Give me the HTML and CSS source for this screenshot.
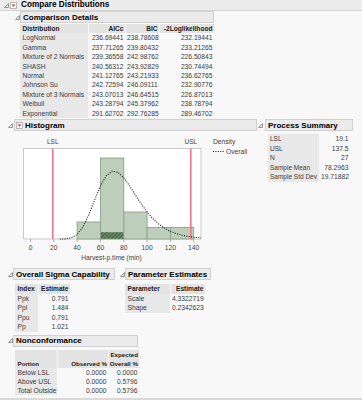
FILE: index.html
```html
<!DOCTYPE html>
<html>
<head>
<meta charset="utf-8">
<title>Compare Distributions</title>
<link rel="stylesheet" href="styles.css">
</head>
<body>
<div class="page">
  <div class="topbar">
    <svg class="tri" width="5" height="5" viewBox="0 0 5 5"><polygon points="4.5,0.5 4.5,4.5 0.5,4.5" fill="#e6e6e6" stroke="#808080" stroke-width="0.8"/></svg>
    <svg class="menu" width="7" height="7" viewBox="0 0 7 7"><rect x="0.5" y="0.5" width="6" height="6" fill="#fff" stroke="#a8a8a8" stroke-width="0.8"/><polygon points="1.6,2.4 5.4,2.4 3.5,4.8" fill="#e0202a"/></svg>
    <span class="toptitle">Compare Distributions</span>
  </div>

  <div class="node n-comp">
    <div class="node-head">
      <svg class="tri" width="5" height="5" viewBox="0 0 5 5"><polygon points="4.5,0.5 4.5,4.5 0.5,4.5" fill="#e6e6e6" stroke="#808080" stroke-width="0.8"/></svg>
      <div class="head-box hb-comp">Comparison Details</div>
    </div>
    <table class="grid t-comp">
      <tr><th class="lab">Distribution</th><th>AICc</th><th>BIC</th><th>-2Loglikelihood</th></tr>
      <tr><td class="lab">LogNormal</td><td>236.69441</td><td>238.78608</td><td>232.19441</td></tr>
      <tr><td class="lab">Gamma</td><td>237.71265</td><td>239.80432</td><td>233.21265</td></tr>
      <tr><td class="lab">Mixture of 2 Normals</td><td>239.36558</td><td>242.98762</td><td>226.50843</td></tr>
      <tr><td class="lab">SHASH</td><td>240.56312</td><td>243.92829</td><td>230.74494</td></tr>
      <tr><td class="lab">Normal</td><td>241.12765</td><td>243.21933</td><td>236.62765</td></tr>
      <tr><td class="lab">Johnson Su</td><td>242.72594</td><td>246.09111</td><td>232.90776</td></tr>
      <tr><td class="lab">Mixture of 3 Normals</td><td>243.07013</td><td>246.64515</td><td>226.87013</td></tr>
      <tr><td class="lab">Weibull</td><td>243.28794</td><td>245.37962</td><td>238.78794</td></tr>
      <tr><td class="lab">Exponential</td><td>291.62702</td><td>292.76285</td><td>289.46702</td></tr>
    </table>
  </div>

  <div class="row r-hist">
    <div class="node n-hist">
      <div class="node-head">
        <svg class="tri" width="5" height="5" viewBox="0 0 5 5"><polygon points="4.5,0.5 4.5,4.5 0.5,4.5" fill="#e6e6e6" stroke="#808080" stroke-width="0.8"/></svg>
        <div class="head-box hb-hist">
          <svg class="menu" width="7" height="7" viewBox="0 0 7 7"><rect x="0.5" y="0.5" width="6" height="6" fill="#fff" stroke="#a8a8a8" stroke-width="0.8"/><polygon points="1.6,2.4 5.4,2.4 3.5,4.8" fill="#e0202a"/></svg>
          <span>Histogram</span>
        </div>
      </div>
      <div class="hist-body">
        <svg class="plot" width="193" height="131" viewBox="14 131 193 131">
          <defs>
            <pattern id="hatch" width="2.6" height="2.6" patternUnits="userSpaceOnUse" patternTransform="rotate(45)">
              <rect width="2.6" height="2.6" fill="#6f8d6c"/>
              <line x1="0.6" y1="0" x2="0.6" y2="2.6" stroke="#3f5b3d" stroke-width="1.1"/>
            </pattern>
          </defs>
          <text class="spec" x="52.8" y="144.3">LSL</text>
          <text class="spec" x="190.8" y="144.3">USL</text>
          <rect x="23.5" y="148.5" width="177.5" height="90.5" fill="#ffffff" stroke="#c9c9c9" stroke-width="1"/>
          <g fill="#bdceba" stroke="#8ea28b" stroke-width="0.9">
            <rect x="77.1" y="222" width="23.4" height="17"/>
            <rect x="100.5" y="158" width="23.3" height="81"/>
            <rect x="123.8" y="212" width="23.3" height="27"/>
            <rect x="147.1" y="227.5" width="23.3" height="11.5"/>
            <rect x="170.4" y="227.5" width="23.3" height="11.5"/>
          </g>
          <rect x="100.9" y="232.2" width="22.5" height="6.6" fill="url(#hatch)"/>
          <line x1="52.8" y1="148.5" x2="52.8" y2="239" stroke="#f27486" stroke-width="1.6"/>
          <line x1="190.8" y1="148.5" x2="190.8" y2="239" stroke="#f27486" stroke-width="1.6"/>
          <polyline fill="none" stroke="#111" stroke-width="1.1" stroke-dasharray="1 1.4" points="59.7,239 65.5,238.85 71.3,237.9 77.1,234.6 83,227 88.8,214.8 94.6,200 100.5,185.9 106.3,175.7 112.1,171.2 118,172.3 123.8,177.8 129.6,185.9 135.4,195 141.3,204 147.1,212 152.9,218.6 158.8,224.1 164.6,228.2 170.4,231.4 176.2,233.6 182.1,235.3 187.9,236.4 193.7,237.3 201,237.9"/>
          <g stroke="#9a9a9a" stroke-width="0.8">
            <line x1="30.5" y1="239" x2="30.5" y2="242"/>
            <line x1="53.8" y1="239" x2="53.8" y2="242"/>
            <line x1="77.1" y1="239" x2="77.1" y2="242"/>
            <line x1="100.5" y1="239" x2="100.5" y2="242"/>
            <line x1="123.8" y1="239" x2="123.8" y2="242"/>
            <line x1="147.1" y1="239" x2="147.1" y2="242"/>
            <line x1="170.4" y1="239" x2="170.4" y2="242"/>
            <line x1="193.7" y1="239" x2="193.7" y2="242"/>
          </g>
          <g class="tick">
            <text x="30.5" y="249.6">0</text>
            <text x="53.8" y="249.6">20</text>
            <text x="77.1" y="249.6">40</text>
            <text x="100.5" y="249.6">60</text>
            <text x="123.8" y="249.6">80</text>
            <text x="147.1" y="249.6">100</text>
            <text x="170.4" y="249.6">120</text>
            <text x="193.7" y="249.6">140</text>
          </g>
          <text class="axis" x="111.5" y="259.8">Harvest-p.time (min)</text>
        </svg>
        <div class="legend">
          <div class="leg-row">Density</div>
          <div class="leg-row"><svg class="leg-line" width="12" height="3" viewBox="0 0 12 3"><line x1="0" y1="1.5" x2="12" y2="1.5" stroke="#111" stroke-width="1.1" stroke-dasharray="1 1.4"/></svg><span>Overall</span></div>
        </div>
      </div>
    </div>

    <div class="node n-proc">
      <div class="node-head">
        <svg class="tri" width="5" height="5" viewBox="0 0 5 5"><polygon points="4.5,0.5 4.5,4.5 0.5,4.5" fill="#e6e6e6" stroke="#808080" stroke-width="0.8"/></svg>
        <div class="head-box hb-proc">Process Summary</div>
      </div>
      <table class="grid t-proc">
        <tr><td class="lab">LSL</td><td>19.1</td></tr>
        <tr><td class="lab">USL</td><td>137.5</td></tr>
        <tr><td class="lab">N</td><td>27</td></tr>
        <tr><td class="lab">Sample Mean</td><td>78.2963</td></tr>
        <tr><td class="lab">Sample Std Dev</td><td>19.71882</td></tr>
      </table>
    </div>
  </div>

  <div class="row r-cap">
    <div class="node n-sig">
      <div class="node-head">
        <svg class="tri" width="5" height="5" viewBox="0 0 5 5"><polygon points="4.5,0.5 4.5,4.5 0.5,4.5" fill="#e6e6e6" stroke="#808080" stroke-width="0.8"/></svg>
        <div class="head-box hb-sig">Overall Sigma Capability</div>
      </div>
      <table class="grid t-sig">
        <tr><th class="lab">Index</th><th>Estimate</th></tr>
        <tr><td class="lab">Ppk</td><td>0.791</td></tr>
        <tr><td class="lab">Ppl</td><td>1.484</td></tr>
        <tr><td class="lab">Ppu</td><td>0.791</td></tr>
        <tr><td class="lab">Pp</td><td>1.021</td></tr>
      </table>
    </div>
    <div class="node n-par">
      <div class="node-head">
        <svg class="tri" width="5" height="5" viewBox="0 0 5 5"><polygon points="4.5,0.5 4.5,4.5 0.5,4.5" fill="#e6e6e6" stroke="#808080" stroke-width="0.8"/></svg>
        <div class="head-box hb-par">Parameter Estimates</div>
      </div>
      <table class="grid t-par">
        <tr><th class="lab">Parameter</th><th>Estimate</th></tr>
        <tr><td class="lab">Scale</td><td>4.3322719</td></tr>
        <tr><td class="lab">Shape</td><td>0.2342623</td></tr>
      </table>
    </div>
  </div>

  <div class="node n-non">
    <div class="node-head">
      <svg class="tri" width="5" height="5" viewBox="0 0 5 5"><polygon points="4.5,0.5 4.5,4.5 0.5,4.5" fill="#e6e6e6" stroke="#808080" stroke-width="0.8"/></svg>
      <div class="head-box hb-non">Nonconformance</div>
    </div>
    <table class="grid t-non">
      <tr class="two"><th class="lab">Portion</th><th>Observed %</th><th>Expected<br>Overall %</th></tr>
      <tr><td class="lab">Below LSL</td><td>0.0000</td><td>0.0000</td></tr>
      <tr><td class="lab">Above USL</td><td>0.0000</td><td>0.5796</td></tr>
      <tr><td class="lab">Total Outside</td><td>0.0000</td><td>0.5796</td></tr>
    </table>
  </div>
</div>
<div class="bottom-strip"></div>
</body>
</html>
```

FILE: styles.css
```css
* { box-sizing: border-box; }
html, body { margin: 0; padding: 0; }
body {
  width: 362px;
  height: 400px;
  overflow: hidden;
  background: #f8f8f8;
  font-family: "Liberation Sans", Arial, sans-serif;
  color: #3a3a3a;
  display: flex;
  flex-direction: column;
}
.page { display: flex; flex-direction: column; }

svg { display: block; flex: none; }

.topbar {
  height: 11px;
  background: #ececec;
  border-bottom: 1px solid #d4d4d4;
  display: flex;
  align-items: center;
  padding-left: 4px;
}
.topbar .tri { margin-right: 1px; }
.topbar .menu { margin-right: 4px; }
.toptitle {
  font-weight: bold;
  font-size: 8.2px;
  color: #000;
  line-height: 10px;
}

.node { display: flex; flex-direction: column; }
.node-head { display: flex; align-items: center; height: 12px; }
.head-box {
  height: 12px;
  background: #ebebeb;
  border: 1px solid #d0d0d0;
  display: flex;
  align-items: center;
  padding-left: 2px;
  font-weight: bold;
  font-size: 8px;
  color: #000;
  white-space: nowrap;
  overflow: hidden;
}
.head-box .menu { margin-right: 2px; }

.row { display: flex; align-items: flex-start; }

/* tables */
.grid {
  border-collapse: separate;
  border-spacing: 0;
  font-size: 6.7px;
  table-layout: fixed;
}
.grid td, .grid th {
  padding: 0 1.5px 0 2px;
  height: 9.4px;
  line-height: 9.4px;
  text-align: right;
  white-space: nowrap;
  overflow: hidden;
}
.grid th {
  font-weight: bold;
  color: #1a1a1a;
  background: #e3e3e3;
  font-size: 6.6px;
}
.grid th + th { box-shadow: inset 1px 0 #f8f8f8; }
.grid .lab { text-align: left; background: #e8e8e8; padding-left: 2.5px; }
.grid th.lab { background: #e3e3e3; }

/* Comparison Details */
.n-comp { margin-left: 15px; margin-top: 0; }
.n-comp .tri { margin-right: 0; }
.hb-comp { width: 194px; padding-left: 2px; }
.t-comp { margin-left: 5px; margin-top: 1px; width: 194px; }
.t-comp td:nth-child(1), .t-comp th:nth-child(1) { width: 68px; }
.t-comp td:nth-child(2), .t-comp th:nth-child(2) { width: 37px; }
.t-comp td:nth-child(3), .t-comp th:nth-child(3) { width: 34px; }
.t-comp td:nth-child(4), .t-comp th:nth-child(4) { width: 55px; }

/* Histogram row */
.r-hist { margin-top: 1px; }
.n-hist { margin-left: 8px; width: 249px; }
.n-hist .tri { margin-right: 1px; }
.hb-hist { width: 243px; padding-left: 1px; }
.hist-body { display: flex; margin-left: 6px; }
.plot text { font-family: "Liberation Sans", Arial, sans-serif; fill: #3f3f3f; }
.plot .spec { font-size: 6.5px; text-anchor: middle; }
.plot .tick text { font-size: 6.7px; text-anchor: middle; }
.plot .axis { font-size: 6.7px; text-anchor: middle; }

.legend { padding-left: 6px; padding-top: 5.5px; font-size: 6.7px; color: #3f3f3f; }
.leg-row { height: 10px; line-height: 9.4px; display: flex; align-items: center; white-space: nowrap; }
.leg-line { margin-right: 1px; }

/* Process Summary */
.n-proc { margin-left: 1px; }
.n-proc .tri { margin-right: 2px; }
.hb-proc { width: 88px; }
.t-proc { margin-left: 10px; margin-top: 3.3px; width: 82px; }
.t-proc td { height: 9.5px; line-height: 9.5px; }
.t-proc td.lab { padding-left: 2px; padding-right: 0; font-size: 6.5px; }
.t-proc td:nth-child(1) { width: 51px; }
.t-proc td:nth-child(2) { width: 31px; }

/* Capability row */
.r-cap { margin-top: 6px; }
.n-sig { margin-left: 8px; }
.n-sig .tri { margin-right: 0; }
.hb-sig { width: 102px; }
.t-sig { margin-left: 7px; margin-top: 4px; width: 55px; }
.t-sig td, .t-sig th { height: 9.5px; line-height: 9.5px; }
.t-sig td:nth-child(1), .t-sig th:nth-child(1) { width: 23px; }
.t-sig td:nth-child(2), .t-sig th:nth-child(2) { width: 32px; }

.n-par { margin-left: 5px; }
.n-par .tri { margin-right: 0; }
.hb-par { width: 86px; }
.t-par { margin-left: 5px; margin-top: 4px; width: 80px; }
.t-par td, .t-par th { height: 9.5px; line-height: 9.5px; }
.t-par td:nth-child(1), .t-par th:nth-child(1) { width: 45px; }
.t-par td:nth-child(2), .t-par th:nth-child(2) { width: 35px; }

/* Nonconformance */
.n-non { margin-left: 8px; margin-top: 3px; }
.n-non .tri { margin-right: 0; }
.hb-non { width: 125px; }
.t-non { margin-left: 7px; margin-top: 3px; width: 124px; }
.t-non td { height: 9.2px; line-height: 9.2px; }
.t-non tr.two th { height: 18px; line-height: 9px; vertical-align: bottom; font-size: 6.2px; padding-left: 1px; padding-right: 1px; }
.t-non tr.two th.lab { padding-left: 2.5px; }
.t-non td:nth-child(1), .t-non th:nth-child(1) { width: 42px; }
.t-non td:nth-child(2), .t-non th:nth-child(2) { width: 51px; }
.t-non td:nth-child(3), .t-non th:nth-child(3) { width: 31px; }

.bottom-strip { margin-top: auto; height: 2px; background: #d9d9d9; flex: none; }
```
